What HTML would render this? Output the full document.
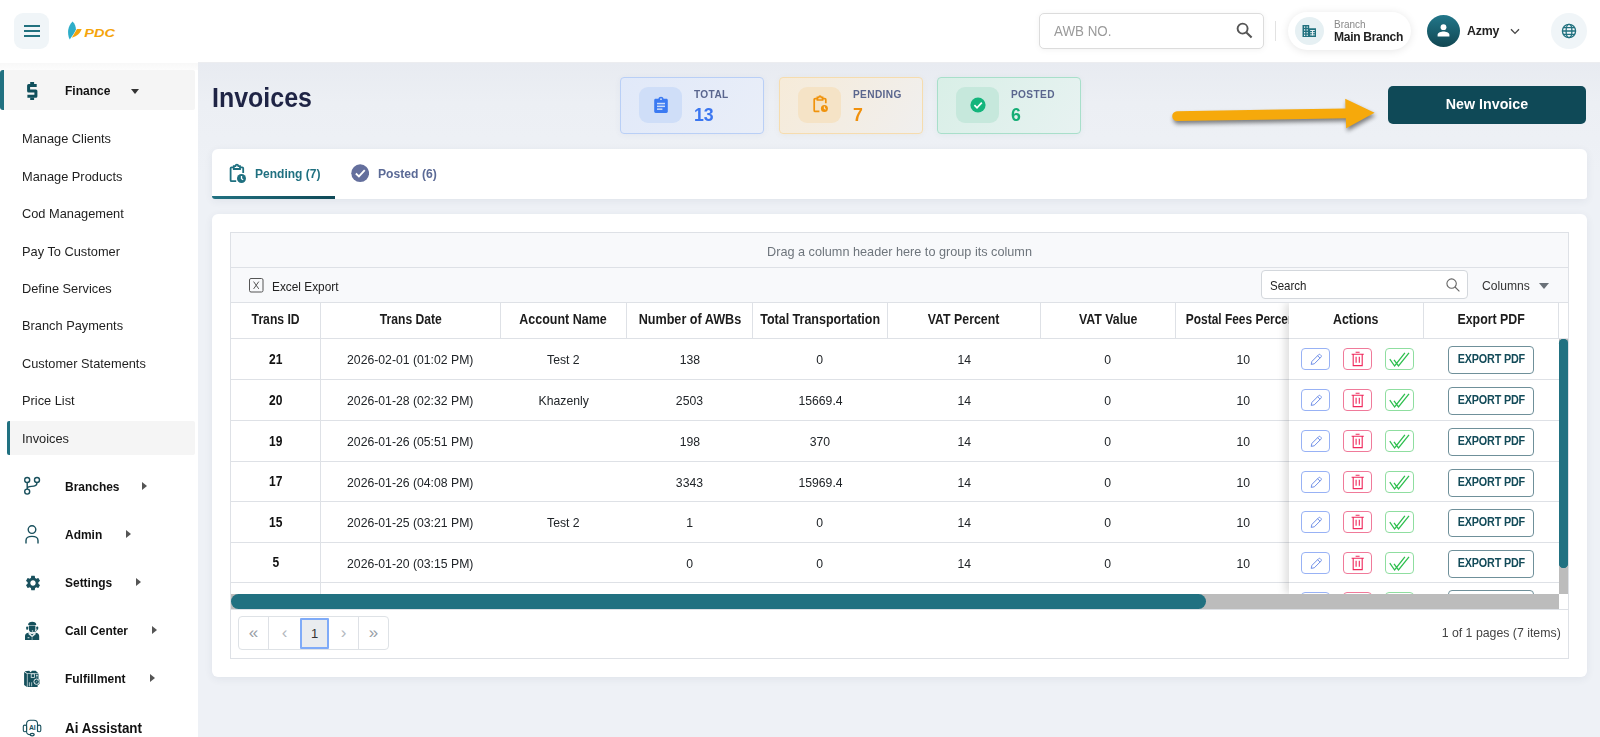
<!DOCTYPE html>
<html lang="en">
<head>
<meta charset="utf-8">
<title>Invoices</title>
<style>
*{box-sizing:border-box;margin:0;padding:0}
html,body{width:1600px;height:737px;overflow:hidden}
body{font-family:"Liberation Sans",sans-serif;background:#edf0f5;color:#222;position:relative}
.abs{position:absolute}
.t{position:absolute;white-space:nowrap;line-height:1}
/* header */
#hdr{position:absolute;left:0;top:0;width:1600px;height:63px;background:#fff;border-bottom:1px solid #ecedf0}
#side{position:absolute;left:0;top:62px;width:198px;height:675px;background:#fff}
#main{position:absolute;left:198px;top:63px;width:1402px;height:674px;background:linear-gradient(180deg,#e8ebf1 0,#eceff4 40px,#eef1f6 110px,#eef1f6 100%)}
.sub{position:absolute;left:21.500px;transform:scaleX(.985);transform-origin:0 50%;font-size:13px;color:#1f1f1f;white-space:nowrap;line-height:16px}
.mm{position:absolute;left:65px;font-size:13px;font-weight:bold;color:#111;white-space:nowrap;line-height:16px}
.tri{position:absolute;width:0;height:0;border-left:5px solid #555;border-top:4px solid transparent;border-bottom:4px solid transparent}
.card{position:absolute;background:#fff;border-radius:6px;box-shadow:0 2px 8px rgba(40,60,90,.07)}
.stat{position:absolute;top:77px;width:144px;height:57px;border-radius:4px;border:1px solid}
.stat .ib{position:absolute;left:18px;top:9px;width:43px;height:36px;border-radius:9px}
.stat .lb{position:absolute;left:72.500px;top:10px;transform:scaleX(.92);transform-origin:0 50%;white-space:nowrap;font-size:11px;font-weight:bold;color:#5a668e;letter-spacing:.4px;line-height:12px}
.stat .nm{position:absolute;left:72.500px;top:27px;transform:scaleX(.934);transform-origin:0 50%;white-space:nowrap;font-size:19px;font-weight:bold;line-height:20px}
/* grid */
#grid{position:absolute;left:230px;top:232px;width:1339px;height:427px;border:1px solid #dee1e6;background:#fff;overflow:hidden;font-size:13px}
.hl{position:absolute;left:0;height:1px;background:#dee1e6}
.vl{position:absolute;width:1px;background:#dee1e6}
.hc{position:absolute;top:69px;height:35px;line-height:35px;text-align:center;font-weight:bold;font-size:14px;color:#1c1c1c;white-space:nowrap;overflow:hidden}
.c{position:absolute;height:40px;line-height:42px;text-align:center;font-size:13px;color:#212529;white-space:nowrap}
.c.b{font-weight:bold;color:#111;font-size:14px}
.ab{position:absolute;width:29px;height:22px;border-radius:4px;border:1px solid}
.ab svg{position:absolute;left:0;top:0}
.ex{position:absolute;left:1217px;width:86px;height:28px;border:1px solid #6f909a;border-radius:4px;background:#fff;color:#134b59;font-size:12px;font-weight:bold;text-align:center;line-height:25px;letter-spacing:-.2px}
.pg{position:absolute;top:0;height:32px;line-height:30px;text-align:center;color:#8a9096;font-size:17px}
</style>
</head>
<body>
<div id="hdr"></div>
<div id="side"></div>
<div id="main"></div>
<!--HEADER-->
<!-- hamburger -->
<div class="abs" style="left:14px;top:13px;width:35px;height:36px;border-radius:9px;background:#f0f5f8"></div>
<div class="abs" style="left:24px;top:25px;width:16px;height:2px;background:#21717f"></div>
<div class="abs" style="left:24px;top:30px;width:16px;height:2px;background:#21717f"></div>
<div class="abs" style="left:24px;top:35px;width:16px;height:2px;background:#21717f"></div>
<!-- logo -->
<svg class="abs" style="left:66px;top:20px" width="52" height="22" viewBox="0 0 52 22">
  <path d="M6.600 1.600 C8.800 4 10 6.800 9.900 9.600 C8.600 12.600 6 16.400 3.700 19.400 C2.200 16.600 1.800 13 2.200 10 C2.700 6.600 4.400 3.600 6.600 1.600Z" fill="#2eadc8"/>
  <path d="M11 9 L15.700 9 C14.400 12.600 11.400 16.400 5.800 17.700 Z" fill="#f5a40a"/>
  <text x="18.200" y="17" font-family="Liberation Sans, sans-serif" font-size="11.200" font-weight="bold" font-style="italic" fill="#f5a40a" textLength="30.700" lengthAdjust="spacingAndGlyphs">PDC</text>
</svg>
<!-- search -->
<div class="abs" style="left:1039px;top:13px;width:225px;height:36px;border:1px solid #dcdcdc;border-radius:5px;background:#fff;box-shadow:0 1px 6px rgba(0,0,0,.05)"></div>
<div class="t" style="left:1054px;top:24px;font-size:14px;color:#9b9b9b;transform:scaleX(.955);transform-origin:0 50%">AWB NO.</div>
<svg class="abs" style="left:1235px;top:21px" width="20" height="20" viewBox="0 0 20 20"><circle cx="7.6" cy="7.6" r="5" fill="none" stroke="#555" stroke-width="1.9"/><path d="M11.4 11.4 L16.6 16.6" stroke="#555" stroke-width="2.1" stroke-linecap="butt"/></svg>
<div class="abs" style="left:1275px;top:21px;width:1px;height:20px;background:#e2e2e2"></div>
<!-- branch pill -->
<div class="abs" style="left:1288px;top:12px;width:123px;height:38px;border-radius:19px;background:#fff;box-shadow:0 1px 8px rgba(0,0,0,.10)"></div>
<div class="abs" style="left:1295px;top:17px;width:29px;height:28px;border-radius:50%;background:#e6f0f3"></div>
<svg class="abs" style="left:1301.600px;top:24px" width="15" height="14" viewBox="0 0 15 14"><path d="M.5 1 H7.200 V4.200 H14 V13 H.5Z" fill="#21717f"/><g fill="#e6f0f3"><rect x="2" y="2.400" width="1.200" height="1.400"/><rect x="4.600" y="2.400" width="1.200" height="1.400"/><rect x="2" y="5.200" width="1.200" height="1.400"/><rect x="4.600" y="5.200" width="1.200" height="1.400"/><rect x="2" y="8" width="1.200" height="1.400"/><rect x="4.600" y="8" width="1.200" height="1.400"/><rect x="2" y="10.600" width="1.200" height="1.400"/><rect x="4.600" y="10.600" width="1.200" height="1.400"/><rect x="8.200" y="6" width="4.600" height="1"/><rect x="8.200" y="8.200" width="4.600" height="1"/><rect x="8.200" y="10.400" width="4.600" height="1"/><rect x="10" y="6" width="1" height="5.400"/></g></svg>
<div class="t" style="left:1334px;top:19px;font-size:10.5px;color:#888;transform:scaleX(.95);transform-origin:0 50%">Branch</div>
<div class="t" style="left:1334px;top:30px;font-size:13px;color:#222;font-weight:bold;letter-spacing:-.35px;transform:scaleX(.93);transform-origin:0 50%">Main Branch</div>
<!-- avatar -->
<div class="abs" style="left:1427px;top:15px;width:33px;height:32px;border-radius:50%;background:linear-gradient(180deg,#22778a,#114752)"></div>
<svg class="abs" style="left:1436px;top:23px" width="15" height="15" viewBox="0 0 15 15"><circle cx="7.5" cy="4.2" r="2.9" fill="#fff"/><path d="M1.6 13.4 V11.8 C1.6 9.6 5.4 8.5 7.5 8.5 C9.6 8.5 13.4 9.6 13.4 11.8 V13.4Z" fill="#fff"/></svg>
<div class="t" style="left:1467px;top:24px;font-size:13px;font-weight:bold;color:#222;letter-spacing:-.2px;transform:scaleX(.95);transform-origin:0 50%">Azmy</div>
<svg class="abs" style="left:1509px;top:27px" width="12" height="9" viewBox="0 0 12 9"><path d="M2 2.2 L6 6.4 L10 2.2" fill="none" stroke="#444" stroke-width="1.3"/></svg>
<!-- globe -->
<div class="abs" style="left:1551px;top:13px;width:36px;height:36px;border-radius:50%;background:#f0f5f8"></div>
<svg class="abs" style="left:1561px;top:23px" width="16" height="16" viewBox="0 0 16 16" fill="none" stroke="#21717f" stroke-width="1.3"><circle cx="8" cy="8" r="6.6"/><ellipse cx="8" cy="8" rx="2.9" ry="6.6"/><path d="M1.4 8 H14.6 M2.4 4.6 H13.6 M2.4 11.4 H13.6"/></svg>
<!--/HEADER-->
<!--SIDEBAR-->
<div class="abs" style="left:0;top:63px;width:198px;height:7px;background:linear-gradient(180deg,#f8f8f8,#fcfcfc)"></div>
<!-- finance row -->
<div class="abs" style="left:0;top:70px;width:195px;height:40px;background:#f5f5f5;border-left:4px solid #217181;border-radius:3px 2px 2px 3px"></div>
<svg class="abs" style="left:24px;top:80px" width="16" height="22" viewBox="0 0 16 22"><path d="M12.700 5.600 H4.600 V11 H11.900 V16.300 H3.400" fill="none" stroke="#10505c" stroke-width="3" stroke-linejoin="round"/><rect x="6.200" y="2" width="3.900" height="2.500" fill="#10505c"/><rect x="6.200" y="17.500" width="3.900" height="2.500" fill="#10505c"/></svg>
<div class="mm" style="top:83px;transform:scaleX(.926);transform-origin:0 50%">Finance</div>
<div class="abs" style="left:131px;top:89px;width:0;height:0;border-top:5px solid #333;border-left:4.5px solid transparent;border-right:4.5px solid transparent"></div>
<!-- sub items -->
<div class="sub" style="top:131px">Manage Clients</div>
<div class="sub" style="top:169px">Manage Products</div>
<div class="sub" style="top:206px">Cod Management</div>
<div class="sub" style="top:244px">Pay To Customer</div>
<div class="sub" style="top:281px">Define Services</div>
<div class="sub" style="top:318px">Branch Payments</div>
<div class="sub" style="top:356px">Customer Statements</div>
<div class="sub" style="top:393px">Price List</div>
<div class="abs" style="left:7px;top:421px;width:188px;height:34px;background:#f5f5f5;border-left:3px solid #217181;border-radius:2px"></div>
<div class="sub" style="top:431px">Invoices</div>
<!-- main items -->
<svg class="abs" style="left:22px;top:475px" width="20" height="22" viewBox="0 0 20 22" fill="none" stroke="#19505d" stroke-width="1.4"><circle cx="5.2" cy="5" r="2.5"/><circle cx="15" cy="5" r="2.5"/><circle cx="5.2" cy="16.6" r="2.5"/><path d="M5.2 7.5 V14.1 M15 7.5 C15 11 12 11.4 9.4 11.4 C6.8 11.4 5.2 12 5.2 14"/></svg>
<div class="mm" style="top:479px;transform:scaleX(.92);transform-origin:0 50%">Branches</div>
<div class="tri" style="left:142px;top:482px"></div>
<svg class="abs" style="left:24px;top:523px" width="16" height="22" viewBox="0 0 16 22" fill="none" stroke="#19505d" stroke-width="1.4"><circle cx="8" cy="6.6" r="3.8"/><path d="M2 20.6 V17.4 C2 14.6 4.4 13.4 8 13.4 C11.6 13.4 14 14.6 14 17.4 V20.6"/></svg>
<div class="mm" style="top:527px;transform:scaleX(.92);transform-origin:0 50%">Admin</div>
<div class="tri" style="left:126px;top:530px"></div>
<svg class="abs" style="left:23.500px;top:573.500px" width="18" height="18" viewBox="0 0 24 24"><path fill="#19505d" d="M19.14 12.94c.04-.3.06-.61.06-.94 0-.32-.02-.64-.07-.94l2.03-1.58a.49.49 0 0 0 .12-.61l-1.92-3.32a.488.488 0 0 0-.59-.22l-2.39.96c-.5-.38-1.03-.7-1.62-.94l-.36-2.54a.484.484 0 0 0-.48-.41h-3.84c-.24 0-.43.17-.47.41l-.36 2.54c-.59.24-1.13.57-1.62.94l-2.39-.96c-.22-.08-.47 0-.59.22L2.74 8.87c-.12.21-.08.47.12.61l2.03 1.58c-.05.3-.09.63-.09.94s.02.64.07.94l-2.03 1.58a.49.49 0 0 0-.12.61l1.92 3.32c.12.22.37.29.59.22l2.39-.96c.5.38 1.03.7 1.62.94l.36 2.54c.05.24.24.41.48.41h3.84c.24 0 .44-.17.47-.41l.36-2.54c.59-.24 1.13-.56 1.62-.94l2.39.96c.22.08.47 0 .59-.22l1.92-3.32c.12-.22.07-.47-.12-.61l-2.01-1.58zM12 15.6c-1.98 0-3.6-1.62-3.6-3.6s1.620-3.6 3.6-3.600 3.600 1.620 3.600 3.600-1.620 3.600-3.600 3.600z"/></svg>
<div class="mm" style="top:575px;transform:scaleX(.92);transform-origin:0 50%">Settings</div>
<div class="tri" style="left:136px;top:578px"></div>
<svg class="abs" style="left:24px;top:621px" width="17" height="20" viewBox="0 0 17 20"><g fill="#15505c"><path d="M4.100 4 C4.100 1.800 5.800 .8 8.200 .8 C10.600 .8 12.300 1.800 12.300 4Z"/><path d="M4.800 4.600 H11.400 V8 C11.400 10 10 11.300 8.100 11.300 C6.200 11.300 4.800 10 4.800 8Z"/><rect x="2.200" y="5.500" width="1.900" height="3.300" rx=".8"/><rect x="12.300" y="5.500" width="1.900" height="3.300" rx=".8"/><path d="M1 19.100 V15 C1 13 2.400 12 4.600 11.700 L8.100 12.600 L11.600 11.700 C13.800 12 15.200 13 15.200 15 V19.100Z"/></g><path d="M4.500 11.700 L11.700 11.700 L11.700 13.200 L8.100 16.300 L4.500 13.200Z" fill="#dfe9eb"/><path d="M6.300 12.500 C7.400 13.300 8.800 13.300 9.900 12.500 L8.100 14.500Z" fill="#15505c"/><rect x="7.600" y="16.200" width="1" height="2.900" fill="#7fa3aa"/><rect x="3.600" y="16.300" width="1.800" height=".9" fill="#e8eff0"/><path d="M12.900 8.600 C12.900 10.200 11.400 10.600 10 10.600" fill="none" stroke="#15505c" stroke-width=".7"/><circle cx="8.500" cy="10" r=".8" fill="#cfdde0"/></svg>
<div class="mm" style="top:623px;transform:scaleX(.918);transform-origin:0 50%">Call Center</div>
<div class="tri" style="left:152px;top:626px"></div>
<svg class="abs" style="left:23px;top:670px" width="18" height="18" viewBox="0 0 18 18"><g fill="#15505c"><path d="M1.100 1.900 L3.900 3.700 V16.900 L1.100 14.900Z"/><path d="M1.600 1.300 L6.200 .8 L7.600 2.200 L9 .8 L12.600 .8 L15.400 3.200 L4.300 3.300Z"/><path d="M4.500 3.800 H15.500 V8.700 C16.400 9.400 17 10.500 17 11.700 C17 13.400 16 14.700 14.600 15.200 V16.900 H4.500Z"/></g><rect x="8.200" y="3.900" width="3.200" height="3.500" fill="none" stroke="#e4ecee" stroke-width=".8"/><circle cx="13.600" cy="11.700" r="2.700" fill="none" stroke="#e9f0f1" stroke-width="1"/><path d="M12.700 12.600 L14.500 10.800" stroke="#b9cdd1" stroke-width=".8"/><g fill="#cfdde0"><rect x="5.900" y="12.300" width=".8" height="4"/><rect x="8.300" y="12.300" width=".8" height="4"/><rect x="13" y="5" width="1.800" height=".8"/><rect x="13.500" y="4.500" width=".8" height="3"/></g></svg>
<div class="mm" style="top:671px;transform:scaleX(.92);transform-origin:0 50%">Fulfillment</div>
<div class="tri" style="left:150px;top:674px"></div>
<svg class="abs" style="left:22px;top:718px" width="20" height="19" viewBox="0 0 20 19" fill="none" stroke="#19505d" stroke-width="1.100"><path d="M4.600 14 V5.800 C4.600 3.400 6.200 2.300 8.200 2.300 H11.900 C13.900 2.300 15.500 3.400 15.500 5.800 V13.800"/><rect x="1.300" y="7.100" width="3.300" height="6.700" rx="1.500"/><rect x="15.500" y="7.100" width="3.300" height="6.700" rx="1.500"/><path d="M4.600 14 C4.700 15.800 6.200 16.600 8.200 16.600"/><ellipse cx="10.200" cy="16.600" rx="2" ry="1.300" stroke-width="1.300"/><text x="6.900" y="11.900" font-family="Liberation Sans, sans-serif" font-size="6.800" font-weight="bold" fill="#19505d" stroke="none">AI</text></svg>
<div class="mm" style="top:719px;font-size:14.5px;line-height:18px;transform:scaleX(.925);transform-origin:0 50%">Ai Assistant</div>
<!--/SIDEBAR-->
<!--CONTENT-->
<div class="t" style="left:212px;top:84px;font-size:27px;font-weight:bold;color:#1f2445;line-height:28px;transform:scaleX(.925);transform-origin:0 50%">Invoices</div>
<!-- stat cards -->
<div class="stat" style="left:620px;background:linear-gradient(120deg,#e1e9f9,#e9eef8);border-color:#b9cff6;box-shadow:0 1px 6px rgba(60,90,160,.06)">
  <div class="ib" style="background:#cfdef8"></div>
  <svg class="abs" style="left:32px;top:18px" width="16" height="18" viewBox="0 0 16 18"><path fill="#3b7af2" d="M2.600 2.800 H5.400 C5.600 1.600 6.600 0.800 8 0.800 C9.400 0.800 10.400 1.600 10.600 2.800 H13.400 C14.200 2.800 14.800 3.400 14.800 4.200 V15.600 C14.800 16.400 14.200 17 13.400 17 H2.600 C1.800 17 1.200 16.400 1.200 15.600 V4.200 C1.200 3.400 1.800 2.800 2.600 2.800Z"/><circle cx="8" cy="3.200" r=".9" fill="#cfdef8"/><rect x="4" y="6.800" width="8" height="1.500" fill="#cfdef8"/><rect x="4" y="9.600" width="8" height="1.500" fill="#cfdef8"/><rect x="4" y="12.400" width="5.400" height="1.500" fill="#cfdef8"/></svg>
  <div class="lb">TOTAL</div><div class="nm" style="color:#3b76f0">13</div>
</div>
<div class="stat" style="left:779px;background:linear-gradient(120deg,#f6ebd9,#f0efee);border-color:#f6dcae;box-shadow:0 1px 6px rgba(160,120,40,.06)">
  <div class="ib" style="background:#f5e3c6"></div>
  <svg class="abs" style="left:32px;top:17px" width="17" height="19" viewBox="0 0 17 19" fill="none" stroke="#f0930c" stroke-width="1.700"><path d="M5.400 3.600 H3.200 C2.600 3.600 2.200 4 2.200 4.600 V15.400 C2.200 16 2.600 16.400 3.200 16.400 H7.400 M10.600 3.600 H12.800 C13.400 3.600 13.800 4 13.800 4.600 V8.200"/><path d="M5.400 2.400 H6.800 C7 1.400 7.400 1 8 1 C8.600 1 9 1.400 9.200 2.400 H10.600 V5 H5.400Z"/><circle cx="12.400" cy="13.400" r="3.500" fill="#f0930c" stroke="none"/><path d="M12.400 11.600 V13.500 L13.700 14.300" stroke="#f5e3c6" stroke-width="1.100"/></svg>
  <div class="lb">PENDING</div><div class="nm" style="color:#f0900c">7</div>
</div>
<div class="stat" style="left:937px;background:linear-gradient(120deg,#d9efe7,#e7f2f1);border-color:#a8dfca;box-shadow:0 1px 6px rgba(40,140,100,.06)">
  <div class="ib" style="background:#c6e8dc"></div>
  <svg class="abs" style="left:32px;top:19px" width="16" height="16" viewBox="0 0 16 16"><circle cx="8" cy="8" r="7.600" fill="#14b57c"/><path d="M4.400 8.200 L7 10.800 L11.800 5.600" fill="none" stroke="#fff" stroke-width="1.700"/></svg>
  <div class="lb">POSTED</div><div class="nm" style="color:#14ad75">6</div>
</div>
<!-- arrow -->
<svg class="abs" style="left:1160px;top:90px;overflow:visible;filter:drop-shadow(1.500px 3px 1.900px rgba(0,0,0,.48))" width="225" height="50" viewBox="1160 90 225 50">
  <path fill="#f6a90b" d="M1177 111.300 L1345.500 108.400 L1345.200 98.800 L1374.600 112.700 L1346.200 128.200 L1345.800 118.300 L1177.200 121.100 A4.900 4.900 0 0 1 1177 111.300Z"/>
</svg>
<!-- new invoice -->
<div class="abs" style="left:1388px;top:86px;width:198px;height:38px;border-radius:5px;background:#0f4957"></div>
<div class="t" style="left:1388px;top:95px;width:198px;text-align:center;font-size:15px;font-weight:bold;color:#fff;line-height:17px;transform:scaleX(.95)">New Invoice</div>
<!-- tabs card -->
<div class="card" style="left:212px;top:149px;width:1375px;height:50px;border-radius:6px 6px 3px 3px"></div>
<div class="abs" style="left:212px;top:196px;width:123px;height:3px;background:linear-gradient(90deg,#217181,#0f4957);border-radius:0 0 0 3px"></div>
<svg class="abs" style="left:227px;top:163px" width="21" height="22" viewBox="0 0 21 22" fill="none" stroke="#1f7080" stroke-width="1.800"><path d="M6.800 4.300 H4.600 C4 4.300 3.600 4.700 3.600 5.300 V17.200 C3.600 17.800 4 18.200 4.600 18.200 H9.200 M13 4.300 H15.200 C15.800 4.300 16.200 4.700 16.200 5.300 V10"/><path d="M6.800 3.200 H8.400 C8.600 2.200 9.200 1.700 9.900 1.700 C10.600 1.700 11.200 2.200 11.400 3.200 H13 V6 H6.800Z"/><circle cx="14.500" cy="15.500" r="4.500" fill="#1f7080" stroke="none"/><path d="M14.500 13.100 V15.700 L16.200 16.700" stroke="#fff" stroke-width="1.300"/></svg>
<div class="t" style="left:255px;top:166px;font-size:13px;font-weight:bold;color:#1f7080;line-height:15px;transform:scaleX(.925);transform-origin:0 50%">Pending (7)</div>
<svg class="abs" style="left:350.700px;top:164.400px" width="18.400" height="18.400" viewBox="0 0 19 19"><circle cx="9.500" cy="9.500" r="9.200" fill="#646f9d"/><path d="M5 9.800 L8.200 12.900 L14.200 6.400" fill="none" stroke="#fff" stroke-width="1.900"/></svg>
<div class="t" style="left:378px;top:166px;font-size:13px;font-weight:bold;color:#5b6a96;line-height:15px;transform:scaleX(.935);transform-origin:0 50%">Posted (6)</div>
<!-- grid card -->
<div class="card" style="left:212px;top:214px;width:1375px;height:463px"></div>
<!--/CONTENT-->
<!--GRID-->
<div id="grid">
<div class="abs" style="left:0;top:0;width:1337px;height:69px;background:#f8f9fb"></div>
<div class="t" style="left:0;top:11px;width:1337px;text-align:center;font-size:13px;line-height:15px;color:#6e757c;transform:scaleX(.975)">Drag a column header here to group its column</div>
<div class="hl" style="top:34px;width:1337px"></div>
<svg class="abs" style="left:18px;top:45px" width="15" height="15" viewBox="0 0 15 15"><rect x=".5" y=".5" width="13.500" height="13.500" rx="1.500" fill="none" stroke="#555" stroke-width="1"/><path d="M4.600 3.600 L9.800 10.900 M9.800 3.600 L4.600 10.900" stroke="#555" stroke-width="1"/></svg>
<div class="t" style="left:41px;top:46px;font-size:13px;line-height:15px;color:#222;transform:scaleX(.911);transform-origin:0 50%">Excel Export</div>
<div class="abs" style="left:1030px;top:37px;width:207px;height:29px;border:1px solid #d3d7dc;border-radius:4px;background:#fff"></div>
<div class="t" style="left:1039px;top:45px;font-size:13px;line-height:15px;color:#222;transform:scaleX(.886);transform-origin:0 50%">Search</div>
<svg class="abs" style="left:1214px;top:44px" width="16" height="16" viewBox="0 0 16 16" fill="none" stroke="#666" stroke-width="1.100"><circle cx="6.600" cy="6.600" r="4.700"/><path d="M10 10 L14.400 14.400"/></svg>
<div class="t" style="left:1251px;top:45px;font-size:13px;line-height:15px;color:#333;transform:scaleX(.932);transform-origin:0 50%">Columns</div>
<div class="abs" style="left:1308px;top:50px;width:0;height:0;border-top:6px solid #6a7178;border-left:5px solid transparent;border-right:5px solid transparent"></div>
<div class="hl" style="top:69px;width:1337px"></div>
<div class="hc" style="left:0px;width:89px"><span style="display:inline-block;transform:scaleX(0.869)">Trans ID</span></div>
<div class="hc" style="left:90px;width:179px"><span style="display:inline-block;transform:scaleX(0.866)">Trans Date</span></div>
<div class="hc" style="left:270px;width:125px"><span style="display:inline-block;transform:scaleX(0.892)">Account Name</span></div>
<div class="hc" style="left:396px;width:125px"><span style="display:inline-block;transform:scaleX(0.901)">Number of AWBs</span></div>
<div class="hc" style="left:522px;width:134px"><span style="display:inline-block;transform:scaleX(0.893)">Total Transportation</span></div>
<div class="hc" style="left:657px;width:152px"><span style="display:inline-block;transform:scaleX(0.882)">VAT Percent</span></div>
<div class="hc" style="left:810px;width:134px"><span style="display:inline-block;transform:scaleX(0.882)">VAT Value</span></div>
<div class="hc" style="left:945px;width:134px"><span style="display:inline-block;transform:scaleX(0.853)">Postal Fees Percent</span></div>
<div class="vl" style="left:89px;top:70px;height:36px"></div>
<div class="vl" style="left:269px;top:70px;height:36px"></div>
<div class="vl" style="left:395px;top:70px;height:36px"></div>
<div class="vl" style="left:521px;top:70px;height:36px"></div>
<div class="vl" style="left:656px;top:70px;height:36px"></div>
<div class="vl" style="left:809px;top:70px;height:36px"></div>
<div class="vl" style="left:944px;top:70px;height:36px"></div>
<div class="vl" style="left:1079px;top:70px;height:36px"></div>
<div class="hl" style="top:105px;width:1337px"></div>
<div class="c b" style="left:0px;width:89px;top:106px;height:40px;line-height:40px"><span style="display:inline-block;transform:scaleX(.86)">21</span></div>
<div class="c" style="left:90px;width:179px;top:107px;height:40px;line-height:40px"><span style="display:inline-block;transform:scaleX(.94)">2026-02-01 (01:02 PM)</span></div>
<div class="c" style="left:270px;width:125px;top:107px;height:40px;line-height:40px"><span style="display:inline-block;transform:scaleX(.94)">Test 2</span></div>
<div class="c" style="left:396px;width:125px;top:107px;height:40px;line-height:40px"><span style="display:inline-block;transform:scaleX(.94)">138</span></div>
<div class="c" style="left:522px;width:134px;top:107px;height:40px;line-height:40px"><span style="display:inline-block;transform:scaleX(.94)">0</span></div>
<div class="c" style="left:657px;width:152px;top:107px;height:40px;line-height:40px"><span style="display:inline-block;transform:scaleX(.94)">14</span></div>
<div class="c" style="left:810px;width:134px;top:107px;height:40px;line-height:40px"><span style="display:inline-block;transform:scaleX(.94)">0</span></div>
<div class="c" style="left:945px;width:134px;top:107px;height:40px;line-height:40px"><span style="display:inline-block;transform:scaleX(.94)">10</span></div>
<div class="hl" style="top:146.0px;width:1337px"></div>
<div class="c b" style="left:0px;width:89px;top:147px;height:40px;line-height:40px"><span style="display:inline-block;transform:scaleX(.86)">20</span></div>
<div class="c" style="left:90px;width:179px;top:148px;height:40px;line-height:40px"><span style="display:inline-block;transform:scaleX(.94)">2026-01-28 (02:32 PM)</span></div>
<div class="c" style="left:270px;width:125px;top:148px;height:40px;line-height:40px"><span style="display:inline-block;transform:scaleX(.94)">Khazenly</span></div>
<div class="c" style="left:396px;width:125px;top:148px;height:40px;line-height:40px"><span style="display:inline-block;transform:scaleX(.94)">2503</span></div>
<div class="c" style="left:522px;width:134px;top:148px;height:40px;line-height:40px"><span style="display:inline-block;transform:scaleX(.94)">15669.4</span></div>
<div class="c" style="left:657px;width:152px;top:148px;height:40px;line-height:40px"><span style="display:inline-block;transform:scaleX(.94)">14</span></div>
<div class="c" style="left:810px;width:134px;top:148px;height:40px;line-height:40px"><span style="display:inline-block;transform:scaleX(.94)">0</span></div>
<div class="c" style="left:945px;width:134px;top:148px;height:40px;line-height:40px"><span style="display:inline-block;transform:scaleX(.94)">10</span></div>
<div class="hl" style="top:187.0px;width:1337px"></div>
<div class="c b" style="left:0px;width:89px;top:188px;height:40px;line-height:40px"><span style="display:inline-block;transform:scaleX(.86)">19</span></div>
<div class="c" style="left:90px;width:179px;top:189px;height:40px;line-height:40px"><span style="display:inline-block;transform:scaleX(.94)">2026-01-26 (05:51 PM)</span></div>
<div class="c" style="left:396px;width:125px;top:189px;height:40px;line-height:40px"><span style="display:inline-block;transform:scaleX(.94)">198</span></div>
<div class="c" style="left:522px;width:134px;top:189px;height:40px;line-height:40px"><span style="display:inline-block;transform:scaleX(.94)">370</span></div>
<div class="c" style="left:657px;width:152px;top:189px;height:40px;line-height:40px"><span style="display:inline-block;transform:scaleX(.94)">14</span></div>
<div class="c" style="left:810px;width:134px;top:189px;height:40px;line-height:40px"><span style="display:inline-block;transform:scaleX(.94)">0</span></div>
<div class="c" style="left:945px;width:134px;top:189px;height:40px;line-height:40px"><span style="display:inline-block;transform:scaleX(.94)">10</span></div>
<div class="hl" style="top:228.0px;width:1337px"></div>
<div class="c b" style="left:0px;width:89px;top:229px;height:39px;line-height:39px"><span style="display:inline-block;transform:scaleX(.86)">17</span></div>
<div class="c" style="left:90px;width:179px;top:230px;height:39px;line-height:39px"><span style="display:inline-block;transform:scaleX(.94)">2026-01-26 (04:08 PM)</span></div>
<div class="c" style="left:396px;width:125px;top:230px;height:39px;line-height:39px"><span style="display:inline-block;transform:scaleX(.94)">3343</span></div>
<div class="c" style="left:522px;width:134px;top:230px;height:39px;line-height:39px"><span style="display:inline-block;transform:scaleX(.94)">15969.4</span></div>
<div class="c" style="left:657px;width:152px;top:230px;height:39px;line-height:39px"><span style="display:inline-block;transform:scaleX(.94)">14</span></div>
<div class="c" style="left:810px;width:134px;top:230px;height:39px;line-height:39px"><span style="display:inline-block;transform:scaleX(.94)">0</span></div>
<div class="c" style="left:945px;width:134px;top:230px;height:39px;line-height:39px"><span style="display:inline-block;transform:scaleX(.94)">10</span></div>
<div class="hl" style="top:268.0px;width:1337px"></div>
<div class="c b" style="left:0px;width:89px;top:269px;height:40px;line-height:40px"><span style="display:inline-block;transform:scaleX(.86)">15</span></div>
<div class="c" style="left:90px;width:179px;top:270px;height:40px;line-height:40px"><span style="display:inline-block;transform:scaleX(.94)">2026-01-25 (03:21 PM)</span></div>
<div class="c" style="left:270px;width:125px;top:270px;height:40px;line-height:40px"><span style="display:inline-block;transform:scaleX(.94)">Test 2</span></div>
<div class="c" style="left:396px;width:125px;top:270px;height:40px;line-height:40px"><span style="display:inline-block;transform:scaleX(.94)">1</span></div>
<div class="c" style="left:522px;width:134px;top:270px;height:40px;line-height:40px"><span style="display:inline-block;transform:scaleX(.94)">0</span></div>
<div class="c" style="left:657px;width:152px;top:270px;height:40px;line-height:40px"><span style="display:inline-block;transform:scaleX(.94)">14</span></div>
<div class="c" style="left:810px;width:134px;top:270px;height:40px;line-height:40px"><span style="display:inline-block;transform:scaleX(.94)">0</span></div>
<div class="c" style="left:945px;width:134px;top:270px;height:40px;line-height:40px"><span style="display:inline-block;transform:scaleX(.94)">10</span></div>
<div class="hl" style="top:309.0px;width:1337px"></div>
<div class="c b" style="left:0px;width:89px;top:310px;height:39px;line-height:39px"><span style="display:inline-block;transform:scaleX(.86)">5</span></div>
<div class="c" style="left:90px;width:179px;top:311px;height:39px;line-height:39px"><span style="display:inline-block;transform:scaleX(.94)">2026-01-20 (03:15 PM)</span></div>
<div class="c" style="left:396px;width:125px;top:311px;height:39px;line-height:39px"><span style="display:inline-block;transform:scaleX(.94)">0</span></div>
<div class="c" style="left:522px;width:134px;top:311px;height:39px;line-height:39px"><span style="display:inline-block;transform:scaleX(.94)">0</span></div>
<div class="c" style="left:657px;width:152px;top:311px;height:39px;line-height:39px"><span style="display:inline-block;transform:scaleX(.94)">14</span></div>
<div class="c" style="left:810px;width:134px;top:311px;height:39px;line-height:39px"><span style="display:inline-block;transform:scaleX(.94)">0</span></div>
<div class="c" style="left:945px;width:134px;top:311px;height:39px;line-height:39px"><span style="display:inline-block;transform:scaleX(.94)">10</span></div>
<div class="hl" style="top:349.0px;width:1337px"></div>
<div class="c b" style="left:0px;width:89px;top:350px;height:40px;line-height:40px"><span style="display:inline-block;transform:scaleX(.86)">4</span></div>
<div class="c" style="left:90px;width:179px;top:351px;height:40px;line-height:40px"><span style="display:inline-block;transform:scaleX(.94)">2026-01-19 (11:40 AM)</span></div>
<div class="c" style="left:396px;width:125px;top:351px;height:40px;line-height:40px"><span style="display:inline-block;transform:scaleX(.94)">12</span></div>
<div class="c" style="left:522px;width:134px;top:351px;height:40px;line-height:40px"><span style="display:inline-block;transform:scaleX(.94)">0</span></div>
<div class="c" style="left:657px;width:152px;top:351px;height:40px;line-height:40px"><span style="display:inline-block;transform:scaleX(.94)">14</span></div>
<div class="c" style="left:810px;width:134px;top:351px;height:40px;line-height:40px"><span style="display:inline-block;transform:scaleX(.94)">0</span></div>
<div class="c" style="left:945px;width:134px;top:351px;height:40px;line-height:40px"><span style="display:inline-block;transform:scaleX(.94)">10</span></div>
<div class="hl" style="top:390.0px;width:1337px"></div>
<div class="vl" style="left:89px;top:106px;height:255px"></div>
<div class="abs" style="left:1058px;top:70px;width:279px;height:291px;background:#fff;box-shadow:-4px 0 8px rgba(0,0,0,.13);clip-path:inset(0 0 0 -12px)"></div>
<div class="hc" style="left:1058px;width:134px"><span style="display:inline-block;transform:scaleX(.882)">Actions</span></div>
<div class="hc" style="left:1193px;width:134px"><span style="display:inline-block;transform:scaleX(.882)">Export PDF</span></div>
<div class="vl" style="left:1192px;top:70px;height:36px"></div>
<div class="vl" style="left:1327px;top:70px;height:36px"></div>
<div class="hl" style="left:1058px;top:105px;width:279px"></div>
<div class="ab" style="left:1070px;top:115.2px;border-color:#98b2f5;background:#fff"><svg width="27" height="20" viewBox="0 -0.800 27 20"><path d="M9.200 14.600 L9.900 11.600 L16.600 4.900 C17.100 4.400 17.800 4.400 18.300 4.900 L19 5.600 C19.500 6.100 19.500 6.800 19 7.300 L12.300 14 Z M15.600 5.900 L18 8.300" fill="none" stroke="#6f8fe8" stroke-width="1"/></svg></div>
<div class="ab" style="left:1112px;top:115.2px;border-color:#f07a9a;background:#fff"><svg width="27" height="20" viewBox="0 0 27 20" fill="none" stroke="#f0265a" stroke-width="1.100"><path d="M7.600 5.200 H19.800 M11.600 3.300 H15.600 M9.200 5.200 V16.600 H18.200 V5.200 M12.100 7.800 V13.800 M15.300 7.800 V13.800"/></svg></div>
<div class="ab" style="left:1154px;top:115.2px;border-color:#8fdea0;background:#fff"><svg width="27" height="20" viewBox="0 0 27 20" fill="none" stroke="#2fbf4f" stroke-width="1.300"><path d="M3.800 10.200 L8.600 17 L18.900 3.800 M8 10.800 L12.500 17 L23 3.800"/></svg></div>
<div class="ex" style="top:112.9px"><span style="display:inline-block;transform:scaleX(.9)">EXPORT PDF</span></div>
<div class="hl" style="left:1058px;top:146.0px;width:270px"></div>
<div class="ab" style="left:1070px;top:156.2px;border-color:#98b2f5;background:#fff"><svg width="27" height="20" viewBox="0 -0.800 27 20"><path d="M9.200 14.600 L9.900 11.600 L16.600 4.900 C17.100 4.400 17.800 4.400 18.300 4.900 L19 5.600 C19.500 6.100 19.500 6.800 19 7.300 L12.300 14 Z M15.600 5.900 L18 8.300" fill="none" stroke="#6f8fe8" stroke-width="1"/></svg></div>
<div class="ab" style="left:1112px;top:156.2px;border-color:#f07a9a;background:#fff"><svg width="27" height="20" viewBox="0 0 27 20" fill="none" stroke="#f0265a" stroke-width="1.100"><path d="M7.600 5.200 H19.800 M11.600 3.300 H15.600 M9.200 5.200 V16.600 H18.200 V5.200 M12.100 7.800 V13.800 M15.300 7.800 V13.800"/></svg></div>
<div class="ab" style="left:1154px;top:156.2px;border-color:#8fdea0;background:#fff"><svg width="27" height="20" viewBox="0 0 27 20" fill="none" stroke="#2fbf4f" stroke-width="1.300"><path d="M3.800 10.200 L8.600 17 L18.900 3.800 M8 10.800 L12.500 17 L23 3.800"/></svg></div>
<div class="ex" style="top:153.9px"><span style="display:inline-block;transform:scaleX(.9)">EXPORT PDF</span></div>
<div class="hl" style="left:1058px;top:187.0px;width:270px"></div>
<div class="ab" style="left:1070px;top:197.2px;border-color:#98b2f5;background:#fff"><svg width="27" height="20" viewBox="0 -0.800 27 20"><path d="M9.200 14.600 L9.900 11.600 L16.600 4.900 C17.100 4.400 17.800 4.400 18.300 4.900 L19 5.600 C19.500 6.100 19.500 6.800 19 7.300 L12.300 14 Z M15.600 5.900 L18 8.300" fill="none" stroke="#6f8fe8" stroke-width="1"/></svg></div>
<div class="ab" style="left:1112px;top:197.2px;border-color:#f07a9a;background:#fff"><svg width="27" height="20" viewBox="0 0 27 20" fill="none" stroke="#f0265a" stroke-width="1.100"><path d="M7.600 5.200 H19.800 M11.600 3.300 H15.600 M9.200 5.200 V16.600 H18.200 V5.200 M12.100 7.800 V13.800 M15.300 7.800 V13.800"/></svg></div>
<div class="ab" style="left:1154px;top:197.2px;border-color:#8fdea0;background:#fff"><svg width="27" height="20" viewBox="0 0 27 20" fill="none" stroke="#2fbf4f" stroke-width="1.300"><path d="M3.800 10.200 L8.600 17 L18.900 3.800 M8 10.800 L12.500 17 L23 3.800"/></svg></div>
<div class="ex" style="top:194.9px"><span style="display:inline-block;transform:scaleX(.9)">EXPORT PDF</span></div>
<div class="hl" style="left:1058px;top:228.0px;width:270px"></div>
<div class="ab" style="left:1070px;top:238.2px;border-color:#98b2f5;background:#fff"><svg width="27" height="20" viewBox="0 -0.800 27 20"><path d="M9.200 14.600 L9.900 11.600 L16.600 4.900 C17.100 4.400 17.800 4.400 18.300 4.900 L19 5.600 C19.500 6.100 19.500 6.800 19 7.300 L12.300 14 Z M15.600 5.900 L18 8.300" fill="none" stroke="#6f8fe8" stroke-width="1"/></svg></div>
<div class="ab" style="left:1112px;top:238.2px;border-color:#f07a9a;background:#fff"><svg width="27" height="20" viewBox="0 0 27 20" fill="none" stroke="#f0265a" stroke-width="1.100"><path d="M7.600 5.200 H19.800 M11.600 3.300 H15.600 M9.200 5.200 V16.600 H18.200 V5.200 M12.100 7.800 V13.800 M15.300 7.800 V13.800"/></svg></div>
<div class="ab" style="left:1154px;top:238.2px;border-color:#8fdea0;background:#fff"><svg width="27" height="20" viewBox="0 0 27 20" fill="none" stroke="#2fbf4f" stroke-width="1.300"><path d="M3.800 10.200 L8.600 17 L18.900 3.800 M8 10.800 L12.500 17 L23 3.800"/></svg></div>
<div class="ex" style="top:235.9px"><span style="display:inline-block;transform:scaleX(.9)">EXPORT PDF</span></div>
<div class="hl" style="left:1058px;top:268.0px;width:270px"></div>
<div class="ab" style="left:1070px;top:278.2px;border-color:#98b2f5;background:#fff"><svg width="27" height="20" viewBox="0 -0.800 27 20"><path d="M9.200 14.600 L9.900 11.600 L16.600 4.900 C17.100 4.400 17.800 4.400 18.300 4.900 L19 5.600 C19.500 6.100 19.500 6.800 19 7.300 L12.300 14 Z M15.600 5.900 L18 8.300" fill="none" stroke="#6f8fe8" stroke-width="1"/></svg></div>
<div class="ab" style="left:1112px;top:278.2px;border-color:#f07a9a;background:#fff"><svg width="27" height="20" viewBox="0 0 27 20" fill="none" stroke="#f0265a" stroke-width="1.100"><path d="M7.600 5.200 H19.800 M11.600 3.300 H15.600 M9.200 5.200 V16.600 H18.200 V5.200 M12.100 7.800 V13.800 M15.300 7.800 V13.800"/></svg></div>
<div class="ab" style="left:1154px;top:278.2px;border-color:#8fdea0;background:#fff"><svg width="27" height="20" viewBox="0 0 27 20" fill="none" stroke="#2fbf4f" stroke-width="1.300"><path d="M3.800 10.200 L8.600 17 L18.900 3.800 M8 10.800 L12.500 17 L23 3.800"/></svg></div>
<div class="ex" style="top:275.9px"><span style="display:inline-block;transform:scaleX(.9)">EXPORT PDF</span></div>
<div class="hl" style="left:1058px;top:309.0px;width:270px"></div>
<div class="ab" style="left:1070px;top:319.2px;border-color:#98b2f5;background:#fff"><svg width="27" height="20" viewBox="0 -0.800 27 20"><path d="M9.200 14.600 L9.900 11.600 L16.600 4.900 C17.100 4.400 17.800 4.400 18.300 4.900 L19 5.600 C19.500 6.100 19.500 6.800 19 7.300 L12.300 14 Z M15.600 5.900 L18 8.300" fill="none" stroke="#6f8fe8" stroke-width="1"/></svg></div>
<div class="ab" style="left:1112px;top:319.2px;border-color:#f07a9a;background:#fff"><svg width="27" height="20" viewBox="0 0 27 20" fill="none" stroke="#f0265a" stroke-width="1.100"><path d="M7.600 5.200 H19.800 M11.600 3.300 H15.600 M9.200 5.200 V16.600 H18.200 V5.200 M12.100 7.800 V13.800 M15.300 7.800 V13.800"/></svg></div>
<div class="ab" style="left:1154px;top:319.2px;border-color:#8fdea0;background:#fff"><svg width="27" height="20" viewBox="0 0 27 20" fill="none" stroke="#2fbf4f" stroke-width="1.300"><path d="M3.800 10.200 L8.600 17 L18.900 3.800 M8 10.800 L12.500 17 L23 3.800"/></svg></div>
<div class="ex" style="top:316.9px"><span style="display:inline-block;transform:scaleX(.9)">EXPORT PDF</span></div>
<div class="hl" style="left:1058px;top:349.0px;width:270px"></div>
<div class="ab" style="left:1070px;top:359.2px;border-color:#98b2f5;background:#fff"><svg width="27" height="20" viewBox="0 -0.800 27 20"><path d="M9.200 14.600 L9.900 11.600 L16.600 4.900 C17.100 4.400 17.800 4.400 18.300 4.900 L19 5.600 C19.500 6.100 19.500 6.800 19 7.300 L12.300 14 Z M15.600 5.900 L18 8.300" fill="none" stroke="#6f8fe8" stroke-width="1"/></svg></div>
<div class="ab" style="left:1112px;top:359.2px;border-color:#f07a9a;background:#fff"><svg width="27" height="20" viewBox="0 0 27 20" fill="none" stroke="#f0265a" stroke-width="1.100"><path d="M7.600 5.200 H19.800 M11.600 3.300 H15.600 M9.200 5.200 V16.600 H18.200 V5.200 M12.100 7.800 V13.800 M15.300 7.800 V13.800"/></svg></div>
<div class="ab" style="left:1154px;top:359.2px;border-color:#8fdea0;background:#fff"><svg width="27" height="20" viewBox="0 0 27 20" fill="none" stroke="#2fbf4f" stroke-width="1.300"><path d="M3.800 10.200 L8.600 17 L18.900 3.800 M8 10.800 L12.500 17 L23 3.800"/></svg></div>
<div class="ex" style="top:356.9px"><span style="display:inline-block;transform:scaleX(.9)">EXPORT PDF</span></div>
<div class="hl" style="left:1058px;top:390.0px;width:270px"></div>
<div class="abs" style="left:1328px;top:106px;width:9px;height:255px;background:#bcbcbc"></div>
<div class="abs" style="left:1328px;top:106px;width:9px;height:229px;background:#217181;border-radius:4.500px"></div>
<div class="abs" style="left:1328px;top:106px;width:9px;height:229px;background:#217181;border-radius:4.500px"></div>
<div class="abs" style="left:0;top:361px;width:1337px;height:15px;background:#fff"></div>
<div class="abs" style="left:0;top:361px;width:1328px;height:15px;background:#bcbcbc"></div>
<div class="abs" style="left:0;top:361px;width:975px;height:15px;background:#217181;border-radius:7.500px"></div>
<div class="abs" style="left:0;top:376px;width:1337px;height:50px;background:#fff"></div>
<div class="hl" style="top:376px;width:1337px"></div>
<div class="abs" style="left:7px;top:383px;width:151px;height:34px;border:1px solid #dee2e6;border-radius:4px;background:#fff"></div>
<div class="vl" style="left:37px;top:384px;height:32px"></div>
<div class="vl" style="left:127px;top:384px;height:32px"></div>
<div class="abs" style="left:69px;top:385px;width:29px;height:31px;border:2.500px solid #7fabf8;background:#e9ecef;border-radius:1px"></div>
<div class="pg" style="left:8px;top:385px;width:29px;color:#989ea6">«</div>
<div class="pg" style="left:38px;top:385px;width:31px;color:#b3b8be">‹</div>
<div class="pg" style="left:69px;top:385px;width:29px;color:#333;font-size:13px;line-height:32px">1</div>
<div class="pg" style="left:98px;top:385px;width:29px;color:#b3b8be">›</div>
<div class="pg" style="left:128px;top:385px;width:29px;color:#989ea6">»</div>
<div class="t" style="right:7px;top:392px;font-size:13px;line-height:15px;color:#444;transform:scaleX(.947);transform-origin:100% 50%">1 of 1 pages (7 items)</div>
</div>
<!--/GRID-->
</body>
</html>
